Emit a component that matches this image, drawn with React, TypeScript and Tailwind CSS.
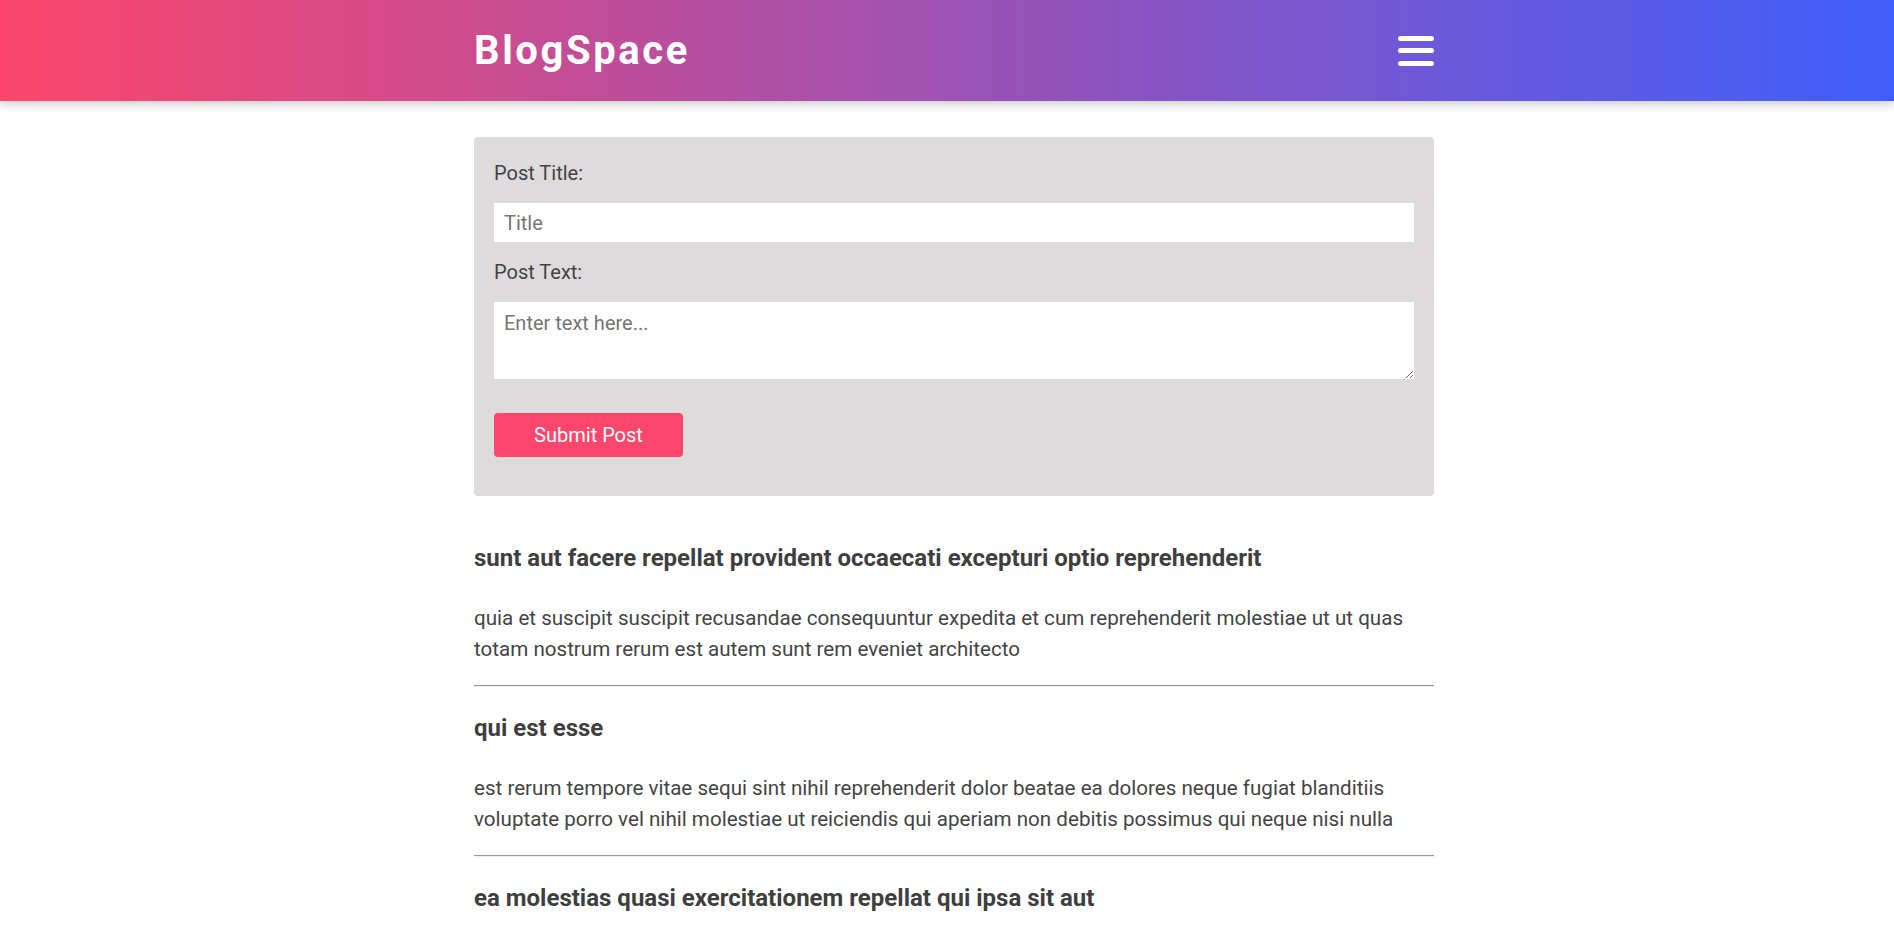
import { useState } from "react";

type Post = {
  id: number;
  title: string;
  body: string;
};

const POSTS: Post[] = [
  {
    id: 1,
    title: "sunt aut facere repellat provident occaecati excepturi optio reprehenderit",
    body: "quia et suscipit suscipit recusandae consequuntur expedita et cum reprehenderit molestiae ut ut quas totam nostrum rerum est autem sunt rem eveniet architecto",
  },
  {
    id: 2,
    title: "qui est esse",
    body: "est rerum tempore vitae sequi sint nihil reprehenderit dolor beatae ea dolores neque fugiat blanditiis voluptate porro vel nihil molestiae ut reiciendis qui aperiam non debitis possimus qui neque nisi nulla",
  },
  {
    id: 3,
    title: "ea molestias quasi exercitationem repellat qui ipsa sit aut",
    body: "et iusto sed quo iure voluptatem occaecati omnis eligendi aut ad voluptatem doloribus vel accusantium quis pariatur molestiae porro eius odio et labore et velit aut",
  },
];

function Header() {
  return (
    <header className="relative z-10 h-[101px] bg-[linear-gradient(90deg,#fc466b_0%,#3f5efb_100%)] shadow-[0_3px_10px_rgba(0,0,0,0.22)]">
      <div className="pl-[14px] h-full">
        <div className="mx-auto flex h-full w-[960px] items-center justify-between">
          <h1 className="text-[40px] font-bold leading-none tracking-[2.6px] text-white">
            BlogSpace
          </h1>
          <button
            type="button"
            aria-label="Menu"
            className="flex w-[36px] flex-col gap-[7.5px]"
          >
            <span className="h-[5px] w-full rounded-full bg-white" />
            <span className="h-[5px] w-full rounded-full bg-white" />
            <span className="h-[5px] w-full rounded-full bg-white" />
          </button>
        </div>
      </div>
    </header>
  );
}

function PostForm() {
  const [title, setTitle] = useState("");
  const [text, setText] = useState("");

  return (
    <form
      onSubmit={(e) => e.preventDefault()}
      className="flex flex-col rounded-[4px] bg-[#dddbdc] px-[20px] pt-[24px] pb-[39px]"
    >
      <label className="leading-[24px] text-[#444]">Post Title:</label>
      <input
        value={title}
        onChange={(e) => setTitle(e.target.value)}
        placeholder="Title"
        className="mt-[18px] h-[39px] bg-white px-[10px] text-[20px] text-[#444] outline-none placeholder:text-[#757575]"
      />
      <label className="mt-[18px] leading-[24px] text-[#444]">Post Text:</label>
      <textarea
        value={text}
        onChange={(e) => setText(e.target.value)}
        placeholder="Enter text here..."
        className="mt-[18px] h-[77px] bg-white px-[10px] pt-[6px] text-[20px] text-[#444] outline-none placeholder:text-[#757575]"
      />
      <button
        type="submit"
        className="mt-[34px] h-[44px] w-[189px] rounded-[4px] bg-[#fc466b] text-white"
      >
        Submit Post
      </button>
    </form>
  );
}

function PostItem({ post }: { post: Post }) {
  return (
    <article className="pt-[27px] pb-[20px]">
      <h3 className="text-[24px] font-bold leading-[28px] text-[#3f3f3f]">
        {post.title}
      </h3>
      <p className="mt-[31px] text-[20.6px] leading-[31px] text-[#444]">{post.body}</p>
    </article>
  );
}

export default function App() {
  return (
    <div className="h-[943px] overflow-hidden bg-white font-['Roboto',sans-serif] text-[20px]">
      <Header />
      <div className="pl-[14px]">
        <main className="mx-auto w-[960px] pt-[36px]">
          <PostForm />
          <div className="mt-[21px]">
            {POSTS.map((p) => (
              <div key={p.id}>
                <PostItem post={p} />
                <hr className="border-t border-t-[#999999] border-b border-b-[#eeeeee]" />
              </div>
            ))}
          </div>
        </main>
      </div>
    </div>
  );
}
